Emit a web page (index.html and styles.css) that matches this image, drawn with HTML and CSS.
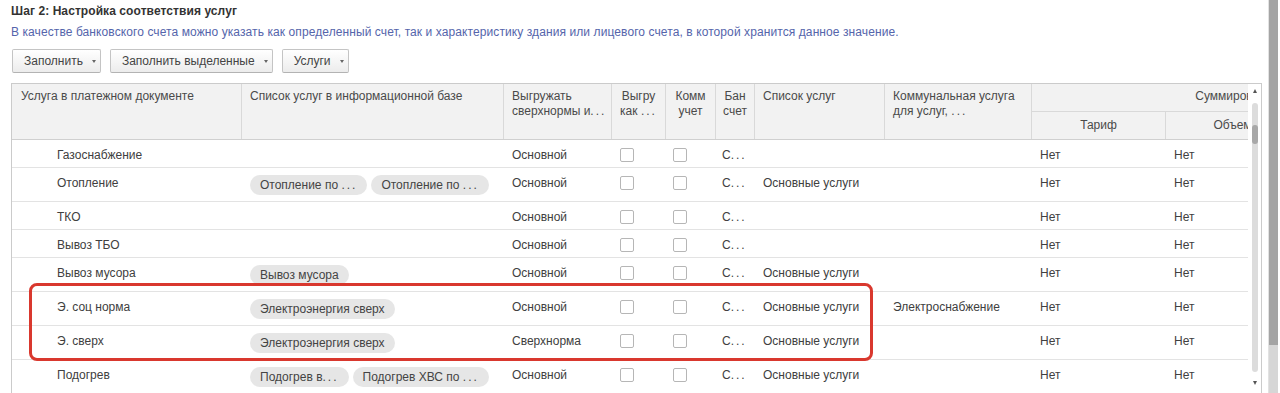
FILE: index.html
```html
<!DOCTYPE html>
<html lang="ru">
<head>
<meta charset="utf-8">
<title>Шаг 2: Настройка соответствия услуг</title>
<link rel="stylesheet" href="styles.css">
</head>
<body>
<div class="page">
  <div class="main">
    <div class="title">Шаг 2: Настройка соответствия услуг</div>
    <div class="hint">В качестве банковского счета можно указать как определенный счет, так и характеристику здания или лицевого счета, в которой хранится данное значение.</div>
    <div class="toolbar">
      <button class="btn">Заполнить <span class="caret"></span></button>
      <button class="btn">Заполнить выделенные <span class="caret"></span></button>
      <button class="btn">Услуги <span class="caret"></span></button>
    </div>
    <div class="table">
      <div class="viewport">
        <div class="grid head">
          <div class="hcell first">Услуга в платежном документе</div>
          <div class="hcell">Список услуг в информационной базе</div>
          <div class="hcell">Выгружать<br>сверхнормы и<span class="ell">...</span></div>
          <div class="hcell center">Выгру<br>как <span class="ell">...</span></div>
          <div class="hcell center">Комм<br>учет</div>
          <div class="hcell center">Бан<br>счет</div>
          <div class="hcell">Список услуг</div>
          <div class="hcell">Коммунальная услуга<br>для услуг, <span class="ell">...</span></div>
          <div class="hgroup">Суммировать</div>
          <div class="hsub c9">Тариф</div>
          <div class="hsub c10">Объем</div>
          <div class="hsub c11">Площадь</div>
        </div>

        <div class="grid row">
          <div class="cell name">Газоснабжение</div>
          <div class="cell"></div>
          <div class="cell">Основной</div>
          <div class="cell cbc"><span class="cb"></span></div>
          <div class="cell cbc2"><span class="cb"></span></div>
          <div class="cell acc">С<span class="ell">...</span></div>
          <div class="cell"></div>
          <div class="cell"></div>
          <div class="cell">Нет</div>
          <div class="cell">Нет</div>
          <div class="cell"></div>
        </div>

        <div class="grid row tall">
          <div class="cell name">Отопление</div>
          <div class="cell pills"><span class="pill">Отопление по <span class="ell">...</span></span><span class="pill">Отопление по <span class="ell">...</span></span></div>
          <div class="cell">Основной</div>
          <div class="cell cbc"><span class="cb"></span></div>
          <div class="cell cbc2"><span class="cb"></span></div>
          <div class="cell acc">С<span class="ell">...</span></div>
          <div class="cell">Основные услуги</div>
          <div class="cell"></div>
          <div class="cell">Нет</div>
          <div class="cell">Нет</div>
          <div class="cell"></div>
        </div>

        <div class="grid row">
          <div class="cell name">ТКО</div>
          <div class="cell"></div>
          <div class="cell">Основной</div>
          <div class="cell cbc"><span class="cb"></span></div>
          <div class="cell cbc2"><span class="cb"></span></div>
          <div class="cell acc">С<span class="ell">...</span></div>
          <div class="cell"></div>
          <div class="cell"></div>
          <div class="cell">Нет</div>
          <div class="cell">Нет</div>
          <div class="cell"></div>
        </div>

        <div class="grid row">
          <div class="cell name">Вывоз ТБО</div>
          <div class="cell"></div>
          <div class="cell">Основной</div>
          <div class="cell cbc"><span class="cb"></span></div>
          <div class="cell cbc2"><span class="cb"></span></div>
          <div class="cell acc">С<span class="ell">...</span></div>
          <div class="cell"></div>
          <div class="cell"></div>
          <div class="cell">Нет</div>
          <div class="cell">Нет</div>
          <div class="cell"></div>
        </div>

        <div class="grid row tall">
          <div class="cell name">Вывоз мусора</div>
          <div class="cell pills"><span class="pill">Вывоз мусора</span></div>
          <div class="cell">Основной</div>
          <div class="cell cbc"><span class="cb"></span></div>
          <div class="cell cbc2"><span class="cb"></span></div>
          <div class="cell acc">С<span class="ell">...</span></div>
          <div class="cell">Основные услуги</div>
          <div class="cell"></div>
          <div class="cell">Нет</div>
          <div class="cell">Нет</div>
          <div class="cell"></div>
        </div>

        <div class="grid row tall">
          <div class="cell name">Э. соц норма</div>
          <div class="cell pills"><span class="pill">Электроэнергия сверх</span></div>
          <div class="cell">Основной</div>
          <div class="cell cbc"><span class="cb"></span></div>
          <div class="cell cbc2"><span class="cb"></span></div>
          <div class="cell acc">С<span class="ell">...</span></div>
          <div class="cell">Основные услуги</div>
          <div class="cell">Электроснабжение</div>
          <div class="cell">Нет</div>
          <div class="cell">Нет</div>
          <div class="cell"></div>
        </div>

        <div class="grid row tall">
          <div class="cell name">Э. сверх</div>
          <div class="cell pills"><span class="pill">Электроэнергия сверх</span></div>
          <div class="cell">Сверхнорма</div>
          <div class="cell cbc"><span class="cb"></span></div>
          <div class="cell cbc2"><span class="cb"></span></div>
          <div class="cell acc">С<span class="ell">...</span></div>
          <div class="cell">Основные услуги</div>
          <div class="cell"></div>
          <div class="cell">Нет</div>
          <div class="cell">Нет</div>
          <div class="cell"></div>
        </div>

        <div class="grid row tall">
          <div class="cell name">Подогрев</div>
          <div class="cell pills"><span class="pill">Подогрев в<span class="ell">...</span></span><span class="pill">Подогрев ХВС по <span class="ell">...</span></span></div>
          <div class="cell">Основной</div>
          <div class="cell cbc"><span class="cb"></span></div>
          <div class="cell cbc2"><span class="cb"></span></div>
          <div class="cell acc">С<span class="ell">...</span></div>
          <div class="cell">Основные услуги</div>
          <div class="cell"></div>
          <div class="cell">Нет</div>
          <div class="cell">Нет</div>
          <div class="cell"></div>
        </div>
      </div>
      <div class="vscroll">
        <span class="arrow up"></span>
        <div class="track"><div class="thumb"></div></div>
        <span class="arrow down"></span>
      </div>
    </div>
  </div>
  <div class="oscroll">
    <div class="othumb"></div>
    <div class="orest"></div>
  </div>
  <div class="highlight"></div>
</div>
</body>
</html>
```

FILE: styles.css
```css
* { box-sizing: border-box; }
html, body { margin: 0; padding: 0; background: #fff; }
body {
  font-family: "Liberation Sans", Arial, sans-serif;
  font-size: 12px;
  color: #404040;
}
.page {
  position: relative;
  display: flex;
  width: 1280px;
  height: 393px;
  overflow: hidden;
}
.main {
  flex: 0 0 1268px;
  padding-left: 11px;
  overflow: hidden;
}
.title {
  margin-top: 4px;
  line-height: 14px;
  font-weight: bold;
  color: #333;
  letter-spacing: 0.08px;
}
.hint {
  margin-top: 7px;
  line-height: 14px;
  color: #5565ab;
  white-space: nowrap;
  letter-spacing: 0.09px;
}
.ell { letter-spacing: 2px; }
.toolbar {
  display: flex;
  gap: 9px;
  margin-top: 10px;
  padding-left: 1px;
}
.btn {
  height: 24px;
  display: flex;
  align-items: center;
  gap: 9px;
  padding: 0 4px 0 11px;
  border: 1px solid #c4c4c4;
  border-bottom-color: #b3b3b3;
  border-radius: 2px;
  background: linear-gradient(#ffffff, #ececec);
  color: #444;
  font: inherit;
  line-height: 14px;
}
.caret {
  width: 0;
  height: 0;
  border-left: 2.5px solid transparent;
  border-right: 2.5px solid transparent;
  border-top: 3px solid #666;
}
.table {
  margin-top: 10px;
  display: flex;
  width: 1251px;
  height: 330px;
  border: 1px solid #cbcbcb;
  border-bottom: none;
}
.viewport {
  flex: 0 0 1236px;
  overflow: hidden;
}
.grid {
  display: grid;
  grid-template-columns: 230px 262px 108px 54px 50px 39px 130px 147px 134px 134px 134px;
  width: max-content;
}
.head {
  grid-template-rows: 28px 27px;
  background: #f2f2f2;
  border-bottom: 1px solid #d0d0d0;
}
.hcell {
  grid-row: 1 / span 2;
  border-right: 1px solid #d9d9d9;
  padding: 5px 8px 0 8px;
  line-height: 15px;
  color: #4a4a4a;
  white-space: nowrap;
  overflow: hidden;
}
.hcell.first { padding-left: 9px; }
.hcell.center { text-align: center; padding-left: 2px; padding-right: 2px; }
.hgroup {
  grid-row: 1;
  grid-column: 9 / span 3;
  border-bottom: 1px solid #d9d9d9;
  padding: 5px 8px 0 8px;
  line-height: 15px;
  color: #4a4a4a;
  text-align: center;
  white-space: nowrap;
}
.hsub {
  grid-row: 2;
  border-right: 1px solid #d9d9d9;
  padding-top: 6px;
  line-height: 15px;
  color: #4a4a4a;
  text-align: center;
  white-space: nowrap;
  overflow: hidden;
}
.hsub.c9 { grid-column: 9; }
.hsub.c10 { grid-column: 10; }
.hsub.c11 { grid-column: 11; }

.row {
  height: 28px;
  border-bottom: 1px solid #e3e3e3;
  align-items: start;
}
.row.tall { height: 34px; }
.cell {
  padding: 8px 0 0 8px;
  line-height: 14px;
  white-space: nowrap;
  overflow: hidden;
}
.cell.name { padding-left: 45px; }
.cell.cbc { padding-left: 8px; }
.cell.cbc2 { padding-left: 7px; }
.cell.acc { padding-left: 6px; }
.cell.pills {
  display: flex;
  gap: 4px;
  padding-top: 7px;
}
.pill {
  display: block;
  height: 20px;
  line-height: 20px;
  padding: 0 10px;
  border-radius: 10px;
  background: #e6e6e6;
  color: #444;
}
.cb {
  display: block;
  width: 14px;
  height: 14px;
  border: 1px solid #b6b6b6;
  border-radius: 2px;
  background: #fff;
}

.vscroll {
  flex: 1;
  display: flex;
  flex-direction: column;
  align-items: center;
  padding-top: 5px;
}
.arrow {
  width: 0;
  height: 0;
  border-left: 2.5px solid transparent;
  border-right: 2.5px solid transparent;
}
.arrow.up { border-bottom: 4px solid #555; }
.arrow.down { border-top: 4px solid #555; margin-top: 9px; }
.track {
  margin-top: 10px;
  width: 6px;
  height: 269px;
  border-radius: 3px;
  background: #dcdcdc;
}
.thumb {
  margin-top: 22px;
  height: 19px;
  border-radius: 3px;
  background: #a8a8a8;
}

.oscroll {
  flex: 0 0 10px;
  display: flex;
  flex-direction: column;
  border-left: 1px solid #e2e2e2;
}
.othumb { height: 345px; background: #a4a4a4; }
.orest { flex: 1; background: #d6d6d6; }

.highlight {
  position: absolute;
  left: 29px;
  top: 283px;
  width: 844px;
  height: 78px;
  border: 3px solid #d9382e;
  border-radius: 8px;
  pointer-events: none;
}
```
